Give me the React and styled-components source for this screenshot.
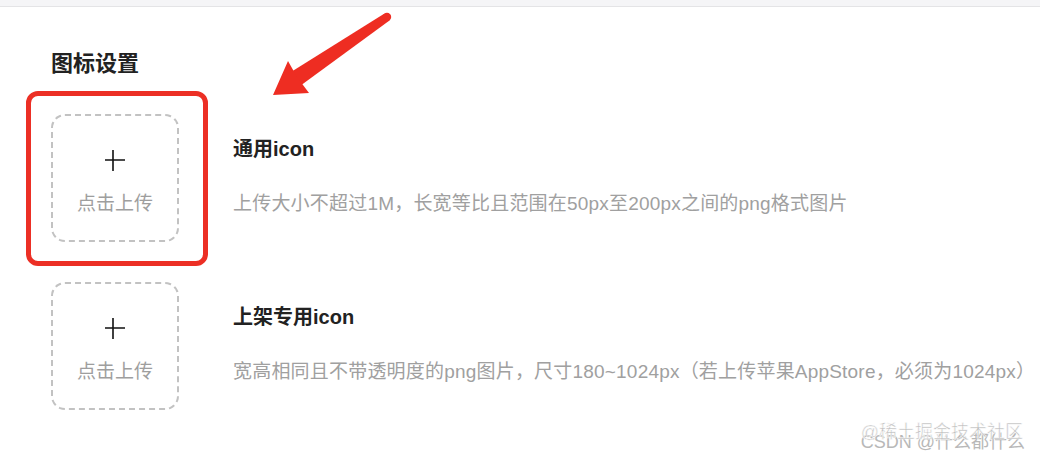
import React from "react";
import styled, { createGlobalStyle } from "styled-components";

const GlobalStyle = createGlobalStyle`
  html, body {
    margin: 0;
    padding: 0;
    background: #fff;
  }
  body {
    font-family: "Liberation Sans", "Noto Sans CJK SC", sans-serif;
    -webkit-font-smoothing: antialiased;
  }
`;

const Page = styled.div`
  position: relative;
  width: 1040px;
  height: 460px;
  overflow: hidden;
  background: #fff;
`;

const TopBar = styled.div`
  height: 6px;
  background: #f5f5f7;
  border-bottom: 1px solid #e4e4e6;
`;

const Section = styled.section`
  padding: 43px 0 0 51px;
`;

const SectionTitle = styled.h2`
  margin: 0 0 36px;
  font-size: 22px;
  line-height: 28px;
  font-weight: 700;
  color: #222;
`;

const List = styled.div`
  display: flex;
  flex-direction: column;
  gap: 40px;
`;

const Row = styled.div`
  display: flex;
  align-items: flex-start;
  gap: 54px;
`;

const UploadBox = styled.div`
  position: relative;
  flex: none;
  box-sizing: border-box;
  width: 128px;
  height: 128px;
  border: 2px dashed #c2c2c2;
  border-radius: 14px;
  display: flex;
  flex-direction: column;
  align-items: center;
  justify-content: center;
  gap: 21px;
  padding-top: 9px;

  ${(p) =>
    p.$marked &&
    `
    &::after {
      content: "";
      position: absolute;
      top: -25px;
      left: -27px;
      right: -31px;
      bottom: -26px;
      border: 5px solid #ec2f25;
      border-radius: 12px;
    }
  `}
`;

const UploadLabel = styled.span`
  font-size: 19px;
  line-height: 24px;
  color: #9e9e9e;
`;

const Info = styled.div`
  display: flex;
  flex-direction: column;
  padding-top: 23px;
  gap: 32px;
`;

const InfoTitle = styled.div`
  font-size: 20px;
  line-height: 24px;
  font-weight: 700;
  color: #222;
`;

const InfoDesc = styled.div`
  font-size: 19px;
  line-height: 22px;
  letter-spacing: 0.2px;
  color: #a0a0a0;
  white-space: nowrap;
`;

const Overlay = styled.svg`
  position: absolute;
  left: 0;
  top: 0;
  pointer-events: none;
`;

const Watermark = styled.div`
  position: absolute;
  right: 15px;
  bottom: 7px;
  display: grid;
  justify-items: end;
  font-size: 18px;
  line-height: 22px;
  white-space: nowrap;
`;

const MarkLine = styled.span`
  grid-area: 1 / 1;
  transform: translate(${(p) => p.$dx}px, ${(p) => p.$dy}px);
  color: ${(p) => p.$color};
  -webkit-text-stroke: ${(p) => (p.$outline ? "0.5px #fff" : "0")};
`;

function PlusIcon() {
  return (
    <svg width="22" height="22" viewBox="0 0 22 22">
      <path d="M9 1v21M1 11h20" stroke="#111" strokeWidth="1.6" fill="none" />
    </svg>
  );
}

const items = [
  {
    title: "通用icon",
    desc: "上传大小不超过1M，长宽等比且范围在50px至200px之间的png格式图片",
    marked: true,
  },
  {
    title: "上架专用icon",
    desc: "宽高相同且不带透明度的png图片，尺寸180~1024px（若上传苹果AppStore，必须为1024px）",
    marked: false,
  },
];

export default function App() {
  return (
    <Page>
      <GlobalStyle />
      <TopBar />
      <Section>
        <SectionTitle>图标设置</SectionTitle>
        <List>
          {items.map((item) => (
            <Row key={item.title}>
              <UploadBox $marked={item.marked}>
                <PlusIcon />
                <UploadLabel>点击上传</UploadLabel>
              </UploadBox>
              <Info>
                <InfoTitle>{item.title}</InfoTitle>
                <InfoDesc>{item.desc}</InfoDesc>
              </Info>
            </Row>
          ))}
        </List>
      </Section>

      <Overlay width="1040" height="460">
        <polygon points="389.5,20.5 384.5,13.5 291,72 300,86" fill="#ee2d22" />
        <circle cx="387" cy="17" r="4.2" fill="#ee2d22" />
        <polygon points="273,95 288,61 297,77 309,93" fill="#ee2d22" />
      </Overlay>

      <Watermark>
        <MarkLine $dx={0} $dy={0} $color="#b8b8b8">CSDN @什么都什么</MarkLine>
        <MarkLine $dx={-2} $dy={-10} $color="#bdbdbd" $outline>
          @稀土掘金技术社区
        </MarkLine>
      </Watermark>
    </Page>
  );
}
